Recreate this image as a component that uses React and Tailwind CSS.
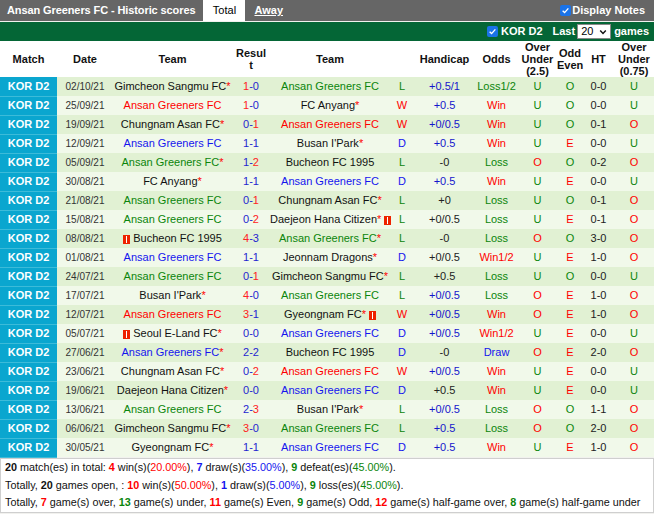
import React from 'react';

// team colour codes: k = black, r = red, b = blue, g = green
const matches = [
    { date: '02/10/21', home: ['Gimcheon Sangmu FC', 'k', true], score: [1, 0], away: ['Ansan Greeners FC', 'g'], wl: 'L', hc: ['+0.5/1', 'b'], odds: 'Loss1/2', ou: 'U', oe: 'O', ht: '0-0', ou2: 'U' },
    { date: '25/09/21', home: ['Ansan Greeners FC', 'r'], score: [1, 0], away: ['FC Anyang', 'k', true], wl: 'W', hc: ['+0.5', 'b'], odds: 'Win', ou: 'U', oe: 'O', ht: '0-0', ou2: 'U' },
    { date: '19/09/21', home: ['Chungnam Asan FC', 'k', true], score: [0, 1], away: ['Ansan Greeners FC', 'r'], wl: 'W', hc: ['+0/0.5', 'b'], odds: 'Win', ou: 'U', oe: 'O', ht: '0-1', ou2: 'O' },
    { date: '12/09/21', home: ['Ansan Greeners FC', 'b'], score: [1, 1], away: ["Busan I'Park", 'k', true], wl: 'D', hc: ['+0.5', 'b'], odds: 'Win', ou: 'U', oe: 'E', ht: '0-0', ou2: 'U' },
    { date: '05/09/21', home: ['Ansan Greeners FC', 'g', true], score: [1, 2], away: ['Bucheon FC 1995', 'k'], wl: 'L', hc: ['-0', 'k'], odds: 'Loss', ou: 'O', oe: 'O', ht: '0-2', ou2: 'O' },
    { date: '30/08/21', home: ['FC Anyang', 'k', true], score: [1, 1], away: ['Ansan Greeners FC', 'b'], wl: 'D', hc: ['+0.5', 'b'], odds: 'Win', ou: 'U', oe: 'E', ht: '0-0', ou2: 'U' },
    { date: '21/08/21', home: ['Ansan Greeners FC', 'g'], score: [0, 1], away: ['Chungnam Asan FC', 'k', true], wl: 'L', hc: ['+0', 'k'], odds: 'Loss', ou: 'U', oe: 'O', ht: '0-1', ou2: 'O' },
    { date: '15/08/21', home: ['Ansan Greeners FC', 'g'], score: [0, 2], away: ['Daejeon Hana Citizen', 'k', true, 'after'], wl: 'L', hc: ['+0/0.5', 'k'], odds: 'Loss', ou: 'U', oe: 'E', ht: '0-1', ou2: 'O' },
    { date: '08/08/21', home: ['Bucheon FC 1995', 'k', false, 'before'], score: [4, 3], away: ['Ansan Greeners FC', 'g', true], wl: 'L', hc: ['-0', 'k'], odds: 'Loss', ou: 'O', oe: 'O', ht: '3-0', ou2: 'O' },
    { date: '01/08/21', home: ['Ansan Greeners FC', 'b'], score: [1, 1], away: ['Jeonnam Dragons', 'k', true], wl: 'D', hc: ['+0/0.5', 'k'], odds: 'Win1/2', ou: 'U', oe: 'E', ht: '1-0', ou2: 'O' },
    { date: '24/07/21', home: ['Ansan Greeners FC', 'g'], score: [0, 1], away: ['Gimcheon Sangmu FC', 'k', true], wl: 'L', hc: ['+0.5', 'k'], odds: 'Loss', ou: 'U', oe: 'O', ht: '0-0', ou2: 'U' },
    { date: '17/07/21', home: ["Busan I'Park", 'k', true], score: [4, 0], away: ['Ansan Greeners FC', 'g'], wl: 'L', hc: ['+0/0.5', 'b'], odds: 'Loss', ou: 'O', oe: 'E', ht: '1-0', ou2: 'O' },
    { date: '12/07/21', home: ['Ansan Greeners FC', 'r'], score: [3, 1], away: ['Gyeongnam FC', 'k', true, 'after'], wl: 'W', hc: ['+0/0.5', 'b'], odds: 'Win', ou: 'O', oe: 'E', ht: '1-0', ou2: 'O' },
    { date: '05/07/21', home: ['Seoul E-Land FC', 'k', true, 'before'], score: [0, 0], away: ['Ansan Greeners FC', 'b'], wl: 'D', hc: ['+0/0.5', 'b'], odds: 'Win1/2', ou: 'U', oe: 'E', ht: '0-0', ou2: 'U' },
    { date: '27/06/21', home: ['Ansan Greeners FC', 'b', true], score: [2, 2], away: ['Bucheon FC 1995', 'k'], wl: 'D', hc: ['-0', 'k'], odds: 'Draw', ou: 'O', oe: 'E', ht: '2-0', ou2: 'O' },
    { date: '23/06/21', home: ['Chungnam Asan FC', 'k', true], score: [0, 2], away: ['Ansan Greeners FC', 'r'], wl: 'W', hc: ['+0/0.5', 'b'], odds: 'Win', ou: 'U', oe: 'E', ht: '0-0', ou2: 'U' },
    { date: '19/06/21', home: ['Daejeon Hana Citizen', 'k', true], score: [0, 0], away: ['Ansan Greeners FC', 'b'], wl: 'D', hc: ['+0.5', 'k'], odds: 'Win', ou: 'U', oe: 'E', ht: '0-0', ou2: 'U' },
    { date: '13/06/21', home: ['Ansan Greeners FC', 'g'], score: [2, 3], away: ["Busan I'Park", 'k', true], wl: 'L', hc: ['+0/0.5', 'b'], odds: 'Loss', ou: 'O', oe: 'O', ht: '1-1', ou2: 'O' },
    { date: '06/06/21', home: ['Gimcheon Sangmu FC', 'k', true], score: [3, 0], away: ['Ansan Greeners FC', 'g'], wl: 'L', hc: ['+0.5', 'b'], odds: 'Loss', ou: 'O', oe: 'O', ht: '2-0', ou2: 'O' },
    { date: '30/05/21', home: ['Gyeongnam FC', 'k', true], score: [1, 1], away: ['Ansan Greeners FC', 'b'], wl: 'D', hc: ['+0.5', 'b'], odds: 'Win', ou: 'U', oe: 'E', ht: '1-0', ou2: 'O' },
];

const teamColor = {
    k: 'text-[#111]',
    r: 'text-[#f00]',
    b: 'text-[#1515ee]',
    g: 'text-[#0b850b]',
};

const wlColor = { W: 'text-[#f00]', L: 'text-[#0b850b]', D: 'text-[#1515ee]' };

const oddsColor = (o) => {
    if (o.startsWith('Win')) return 'text-[#f00]';
    if (o === 'Draw') return 'text-[#1515ee]';
    return 'text-[#0b850b]';
};

const RedCard = () => (
    <span className="inline-flex h-[9px] w-[7px] items-center justify-center bg-[#ee2200] align-[-1px]">
        <span className="h-[7px] w-[1px] bg-white" />
    </span>
);

const Team = ({ t }) => {
    const [name, color, star, card] = t;
    return (
        <span className="whitespace-nowrap">
            {card === 'before' && <><RedCard /> </>}
            <span className={teamColor[color]}>{name}</span>
            {star && <span className="text-[#f00]">*</span>}
            {card === 'after' && <> <RedCard /></>}
        </span>
    );
};

const Check = () => (
    <span className="inline-flex h-[11px] w-[11px] items-center justify-center rounded-[2px] bg-[#1a73e8]">
        <svg viewBox="0 0 12 12" className="h-[9px] w-[9px]">
            <path d="M2.2 6.3 L4.8 8.8 L9.8 3.2" fill="none" stroke="white" strokeWidth="1.8" />
        </svg>
    </span>
);

const App = () => {
    return (
        <div className="w-[654px] h-[514px] bg-[#f1f1ee] text-[11px] text-[#111] leading-none" style={{ fontFamily: '"Liberation Sans", Arial, sans-serif' }}>
            {/* Title bar */}
            <div className="flex h-[21px] items-stretch bg-[#666]">
                <div className="flex items-center pl-[7px] pr-[8px] text-[11px] font-bold tracking-[-0.1px] text-white">
                    Ansan Greeners FC - Historic scores
                </div>
                <div className="flex w-[42px] items-center justify-center bg-white text-[11px] text-black">Total</div>
                <div className="flex items-center pl-[9px] text-[11px] font-bold text-white underline">Away</div>
                <div className="ml-auto flex items-center gap-[1px] pr-[9px] text-[11px] font-bold text-white">
                    <Check />
                    <span>Display Notes</span>
                </div>
            </div>

            {/* Filter bar */}
            <div className="mt-[1px] flex h-[19px] items-center justify-end bg-[#046636] pr-[5px] text-[11px] font-bold text-white">
                <Check />
                <span className="ml-[3px]">KOR D2</span>
                <span className="ml-[10px]">Last</span>
                <span className="ml-[2px] flex h-[15px] w-[34px] items-center justify-between border border-[#888] bg-white px-[3px] text-[11px] font-normal text-black">
                    20
                    <svg viewBox="0 0 10 10" className="h-[8px] w-[8px]">
                        <path d="M1.5 3 L5 6.8 L8.5 3" fill="none" stroke="#111" strokeWidth="1.8" />
                    </svg>
                </span>
                <span className="ml-[3px]">games</span>
            </div>

            <table className="w-[654px] table-fixed border-collapse">
                <colgroup>
                    <col className="w-[57px]" />
                    <col className="w-[56px]" />
                    <col className="w-[119px]" />
                    <col className="w-[38px]" />
                    <col className="w-[120px]" />
                    <col className="w-[24px]" />
                    <col className="w-[61px]" />
                    <col className="w-[43px]" />
                    <col className="w-[39px]" />
                    <col className="w-[26px]" />
                    <col className="w-[31px]" />
                    <col className="w-[40px]" />
                </colgroup>
                <thead>
                    <tr className="h-[36px] bg-white text-[11px] font-bold leading-[12px] text-[#111]">
                        <th>Match</th>
                        <th>Date</th>
                        <th>Team</th>
                        <th>Resul<br />t</th>
                        <th>Team</th>
                        <th></th>
                        <th>Handicap</th>
                        <th>Odds</th>
                        <th>Over<br />Under<br />(2.5)</th>
                        <th>Odd<br />Even</th>
                        <th>HT</th>
                        <th>Over<br />Under<br />(0.75)</th>
                    </tr>
                </thead>
                <tbody>
                    {matches.map((m, i) => {
                        const [h, a] = m.score;
                        return (
                            <tr key={m.date} className={`h-[19px] text-center ${i % 2 === 0 ? 'bg-[#e1f1d3]' : 'bg-[#f1f9ea]'}`}>
                                <td className="border-b border-[#3cbbd9] bg-[#0aa6cf] font-bold text-white">KOR D2</td>
                                <td className="text-[10px] text-[#333]">{m.date}</td>
                                <td><Team t={m.home} /></td>
                                <td>
                                    <span className={h > a ? 'text-[#f22]' : 'text-[#2525d0]'}>{h}</span>
                                    <span className="text-[#2525d0]">-</span>
                                    <span className={a > h ? 'text-[#f22]' : 'text-[#2525d0]'}>{a}</span>
                                </td>
                                <td><Team t={m.away} /></td>
                                <td className={wlColor[m.wl]}>{m.wl}</td>
                                <td className={m.hc[1] === 'b' ? 'text-[#1515cc]' : 'text-[#222]'}>{m.hc[0]}</td>
                                <td className={oddsColor(m.odds)}>{m.odds}</td>
                                <td className={m.ou === 'O' ? 'text-[#f00]' : 'text-[#0b850b]'}>{m.ou}</td>
                                <td className={m.oe === 'E' ? 'text-[#f00]' : 'text-[#0b850b]'}>{m.oe}</td>
                                <td className="text-[#222]">{m.ht}</td>
                                <td className={m.ou2 === 'O' ? 'text-[#f00]' : 'text-[#0b850b]'}>{m.ou2}</td>
                            </tr>
                        );
                    })}
                </tbody>
            </table>

            {/* Summary */}
            <div className="flex h-[55px] flex-col justify-center gap-[7px] border border-[#cfcfcf] bg-white pl-[4px] text-[10.8px] whitespace-nowrap text-[#111]">
                <div>
                    <b>20</b> match(es) in total: <b className="text-[#f00]">4</b> win(s)(<span className="text-[#f00]">20.00%</span>), <b className="text-[#1515ee]">7</b> draw(s)(<span className="text-[#1515ee]">35.00%</span>), <b className="text-[#0b850b]">9</b> defeat(es)(<span className="text-[#0b850b]">45.00%</span>).
                </div>
                <div>
                    Totally, <b>20</b> games open, : <b className="text-[#f00]">10</b> win(s)(<span className="text-[#f00]">50.00%</span>), <b className="text-[#1515ee]">1</b> draw(s)(<span className="text-[#1515ee]">5.00%</span>), <b className="text-[#0b850b]">9</b> loss(es)(<span className="text-[#0b850b]">45.00%</span>).
                </div>
                <div>
                    Totally, <b className="text-[#f00]">7</b> game(s) over, <b className="text-[#0b850b]">13</b> game(s) under, <b className="text-[#f00]">11</b> game(s) Even, <b className="text-[#0b850b]">9</b> game(s) Odd, <b className="text-[#f00]">12</b> game(s) half-game over, <b className="text-[#0b850b]">8</b> game(s) half-game under
                </div>
            </div>
        </div>
    );
};

export default App;
